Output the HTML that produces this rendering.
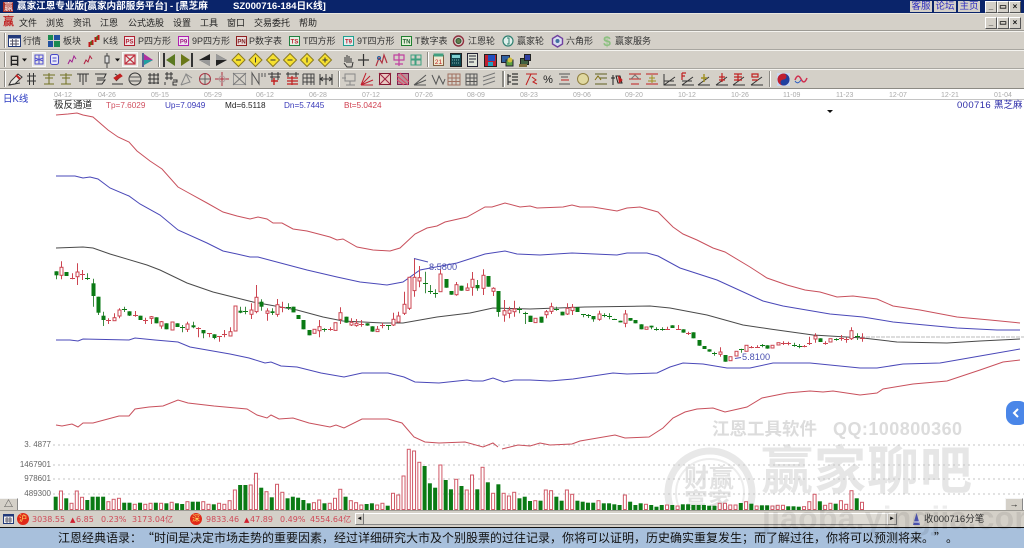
<!DOCTYPE html>
<html lang="zh-CN">
<head>
<meta charset="utf-8">
<title>赢家江恩专业版</title>
<style>
html,body{margin:0;padding:0;background:#fff}
body{width:1024px;height:548px;overflow:hidden;position:relative;font-family:"Liberation Sans","Noto Sans CJK SC",sans-serif;color:#222}
#w{position:absolute;left:0;top:0;width:1024px;height:548px;overflow:hidden;filter:blur(.3px)}
.t{position:absolute;white-space:nowrap;line-height:12px}
.b{position:absolute}
.m{font-size:9px;color:#222;top:17px}
.r2{font-size:9px;color:#333;top:35px}
.d{font-size:7px;color:#aaa;top:90px;letter-spacing:0}
.i{font-size:8.2px;top:100px}
.y{font-size:8px;color:#666;width:48px;text-align:right;left:3px}
.s{font-family:"DejaVu Sans","Noto Sans CJK SC",sans-serif;font-size:8px;color:#cf4a58;top:514px}
.tb{position:absolute;top:1px;height:11px;width:22px;background:#d4d0c8;color:#2a2ac0;font-size:9.5px;line-height:11px;text-align:center}
.wb{position:absolute;width:10px;height:10px;background:#d4d0c8;border-right:1px solid #555;border-bottom:1px solid #555;border-top:1px solid #fff;border-left:1px solid #fff;color:#111;font-size:8px;line-height:10px;text-align:center;font-weight:bold;box-sizing:content-box}
svg{position:absolute;left:0;top:0}
</style>
</head>
<body>
<div id="w">
<!-- chrome -->
<div class="b" style="left:0;top:0;width:1024px;height:13px;background:#0a246a"></div>
<div class="b" style="left:0;top:13px;width:1024px;height:76px;background:#d4d0c8"></div>
<div class="b" style="left:0;top:13px;width:1024px;height:1px;background:#e8e6e0"></div>
<div class="b" style="left:0;top:30px;width:1024px;height:1px;background:#9c9a94"></div>
<div class="b" style="left:0;top:31px;width:1024px;height:1px;background:#f4f3ef"></div>
<div class="b" style="left:0;top:49px;width:1024px;height:1px;background:#a8a6a0"></div>
<div class="b" style="left:0;top:50px;width:1024px;height:1px;background:#f4f3ef"></div>
<div class="b" style="left:0;top:68px;width:1024px;height:1px;background:#a8a6a0"></div>
<div class="b" style="left:0;top:69px;width:1024px;height:1px;background:#f4f3ef"></div>
<div class="b" style="left:0;top:88px;width:1024px;height:1px;background:#8c8a84"></div>
<div class="b" style="left:53px;top:99px;width:971px;height:1px;background:#c4c4c4"></div>

<!-- title -->
<div class="b" style="left:3px;top:2px;width:10px;height:10px;background:#a8342c"></div>
<span class="t" style="left:4px;top:1px;font-size:9px;color:#fff">赢</span>
<span class="t" style="left:17px;top:1px;font-size:9.6px;color:#fff;font-weight:bold;letter-spacing:0">赢家江恩专业版[赢家内部服务平台] - [黑芝麻</span>
<span class="t" style="left:233px;top:1px;font-size:9.6px;color:#fff;font-weight:bold">SZ000716-184日K线]</span>
<div class="tb" style="left:910px">客服</div>
<div class="tb" style="left:934px">论坛</div>
<div class="tb" style="left:958px">主页</div>
<div class="wb" style="left:985px;top:1px">_</div>
<div class="wb" style="left:997px;top:1px">&#9645;</div>
<div class="wb" style="left:1009px;top:1px">×</div>
<div class="wb" style="left:985px;top:17px">_</div>
<div class="wb" style="left:997px;top:17px">&#9645;</div>
<div class="wb" style="left:1009px;top:17px">×</div>

<!-- menu -->
<span class="t" style="left:3px;top:16px;font-size:11px;color:#c02020;font-weight:bold">赢</span>
<span class="t m" style="left:19px">文件</span>
<span class="t m" style="left:46px">浏览</span>
<span class="t m" style="left:73px">资讯</span>
<span class="t m" style="left:100px">江恩</span>
<span class="t m" style="left:128px">公式选股</span>
<span class="t m" style="left:173px">设置</span>
<span class="t m" style="left:200px">工具</span>
<span class="t m" style="left:227px">窗口</span>
<span class="t m" style="left:254px">交易委托</span>
<span class="t m" style="left:299px">帮助</span>

<!-- row 2 labels -->
<span class="t r2" style="left:23px">行情</span>
<span class="t r2" style="left:63px">板块</span>
<span class="t r2" style="left:103px">K线</span>
<span class="t r2" style="left:138px">P四方形</span>
<span class="t r2" style="left:192px">9P四方形</span>
<span class="t r2" style="left:249px">P数字表</span>
<span class="t r2" style="left:303px">T四方形</span>
<span class="t r2" style="left:357px">9T四方形</span>
<span class="t r2" style="left:415px">T数字表</span>
<span class="t r2" style="left:468px">江恩轮</span>
<span class="t r2" style="left:517px">赢家轮</span>
<span class="t r2" style="left:566px">六角形</span>
<span class="t r2" style="left:615px">赢家服务</span>

<!-- toolbar icons -->
<svg width="1024" height="89" viewBox="0 0 1024 89" fill="none">
<g stroke="#8c8a84"><path d="M4.500 33V48M4.500 52V67M4.500 71V87M158.500 52V67M427.500 52V67M338.500 71V87M502.500 71V87M769.500 71V87"/></g>
<g stroke="#fff"><path d="M5.500 33V48M5.500 52V67M5.500 71V87M159.500 52V67M428.500 52V67M339.500 71V87M504.500 71V87M770.500 71V87"/></g>
<path d="M503.500 71V87" stroke="#8c8a84"/>
<!-- row 2 -->
<rect x="8.500" y="35.500" width="12" height="11" fill="#fff" stroke="#223a7a"/><rect x="8.500" y="35.500" width="12" height="3" fill="#223a7a"/><path d="M10 41h9M10 44h9M12.500 39v7M16 39v7" stroke="#556"/>
<g><rect x="48" y="35" width="5" height="5" fill="#1a8a50"/><rect x="54" y="35" width="6" height="5" fill="#2050a0"/><rect x="48" y="41" width="5" height="6" fill="#2050a0"/><rect x="54" y="41" width="6" height="6" fill="#1a8a50"/></g>
<path d="M89.500 42v5M92.500 40v5M95.500 37v5M98.500 35v5" stroke="#c01818" stroke-width="2"/><path d="M91 41v4M97 36v4" stroke="#189018" stroke-width="1"/>
<g font-family="Liberation Sans" font-size="6" font-weight="bold" text-anchor="middle">
<rect x="124.500" y="36.500" width="10" height="9" fill="#efe4e8" stroke="#b02030"/><text x="129.500" y="43.500" fill="#b02030">PS</text>
<rect x="178.500" y="36.500" width="10" height="9" fill="#f0e4f0" stroke="#b020b0"/><text x="183.500" y="43.500" fill="#a01880">P9</text>
<rect x="236.500" y="36.500" width="10" height="9" fill="#e8dcdc" stroke="#902020"/><text x="241.500" y="43.500" fill="#802020">PN</text>
<rect x="289.500" y="36.500" width="10" height="9" fill="#e4f0e4" stroke="#208040"/><text x="294.500" y="43.500" fill="#c02030">TS</text>
<rect x="343.500" y="36.500" width="10" height="9" fill="#e4f0f0" stroke="#20a090"/><text x="348.500" y="43.500" fill="#c02030">T9</text>
<rect x="401.500" y="36.500" width="10" height="9" fill="#e4f0d8" stroke="#208030"/><text x="406.500" y="43.500" fill="#206030">TN</text>
</g>
<circle cx="458.500" cy="41" r="5" stroke="#903040" stroke-width="1.400"/><circle cx="458.500" cy="41" r="2.500" fill="#608050" stroke="#305030"/>
<circle cx="508" cy="41" r="5" stroke="#308070" stroke-width="1.200" fill="#dff0ec"/><path d="M507 38h2v6h-2" stroke="#308070"/>
<path d="M557.500 35.500l5 3v5.500l-5 3-5-3v-5.500z" stroke="#7040a0" stroke-width="1.400" fill="#d8dcf0"/><circle cx="557.500" cy="41" r="2" fill="#4070a0"/>
<text x="607" y="46" font-family="Liberation Sans" font-size="14" font-weight="bold" fill="#8cc080" text-anchor="middle">$</text>
<!-- row 3 -->
<path d="M22 58.500h5l-2.500 3zM115 58.500h5l-2.500 3z" fill="#111"/>
<text x="9" y="64.500" font-family="Noto Sans CJK SC" font-size="11" font-weight="bold" fill="#222">日</text>
<rect x="32.500" y="52.500" width="13" height="14" fill="#e8e6e2" stroke="#f8f8f8"/>
<path d="M35 55h8v9h-8zM35 58l8 3M43 58l-8 3M39 55v9" stroke="#5050d0"/>
<rect x="50.500" y="54.500" width="8" height="10" rx="2" stroke="#4848c8" fill="#e8e8f8"/><path d="M52.500 58h4M52.500 61h4" stroke="#4848c8"/>
<path d="M68 64l2-4 2 2 2-6 2 3" stroke="#a02090"/><path d="M84 64l2-4 2 2 2-6 2 3" stroke="#b02040"/>
<path d="M107 53v15" stroke="#444"/><rect x="105" y="56" width="4" height="7" fill="#ddd" stroke="#444"/>
<rect x="122.500" y="52.500" width="15" height="14" fill="#e8e6e2" stroke="#f8f8f8"/>
<path d="M125 55l10 9M135 55l-10 9M125 55h10v9h-10z" stroke="#c03040" stroke-width="1.200"/>
<path d="M143 53v14" stroke="#304080" stroke-width="1.500"/><path d="M144 54l9 6-9 5z" fill="#b030a0"/><path d="M144 60h9l-9 5z" fill="#20a0a0"/>
<path d="M164 53v14" stroke="#333" stroke-width="2"/><path d="M175 54v12l-9-6z" fill="#5a7820"/>
<path d="M192 53v14" stroke="#333" stroke-width="2"/><path d="M181 54v12l9-6z" fill="#6a7818"/>
<path d="M210 54v12l-11-6z" fill="#222"/><path d="M210 60v6l-11-6z" fill="#999"/>
<path d="M216 54v12l11-6z" fill="#222"/><path d="M216 54v6l11 0z" fill="#999"/>
<g fill="#f6e030" stroke="#8a7a20">
<path d="M238.500 53.500l6.500 6.500-6.500 6.500-6.500-6.500z"/><path d="M255.500 53.500l6.500 6.500-6.500 6.500-6.500-6.500z"/><path d="M273 53.500l6.500 6.500-6.500 6.500-6.500-6.500z"/><path d="M290 53.500l6.500 6.500-6.500 6.500-6.500-6.500z"/><path d="M307 53.500l6.500 6.500-6.500 6.500-6.500-6.500z"/><path d="M325 53.500l6.500 6.500-6.500 6.500-6.500-6.500z"/></g>
<g stroke="#333" fill="none"><path d="M236 60h5M255.500 57.500v5M270.500 60h5M287.500 60h5M307 57.500v5M322.500 60h5M325 57.500v5"/></g>
<path d="M345 62v-5m2 6v-8m2 8v-7m2 7v-5m-7 5l3 4h5l1-5" stroke="#333"/>
<path d="M363.500 54v12M358 60h11" stroke="#333" stroke-width="1.200"/>
<path d="M376 66l3-8 3 5 2-8 3 8" stroke="#b03040" stroke-width="1.200"/><circle cx="379" cy="58" r="1.500" stroke="#2060a0"/>
<path d="M394 55h10v5h-10zM399 53v13M395 64h8" stroke="#c040a0" stroke-width="1.200"/>
<path d="M411 55h4v4h-4zM416 55h5v4h-5zM411 60h4v5h-4zM416 60h5v5h-5z" stroke="#40a080"/>
<rect x="433.500" y="55.500" width="10" height="10" fill="#f0e8d0" stroke="#806040"/><rect x="433.500" y="53.500" width="10" height="3" fill="#40a080"/><text x="438.500" y="64" font-size="6.500" font-family="Liberation Sans" fill="#c02020" text-anchor="middle">21</text>
<rect x="450.500" y="53.500" width="11" height="13" fill="#104850" stroke="#222"/><rect x="452" y="55" width="8" height="3" fill="#80d0d0"/><path d="M452 60h8M452 63h8" stroke="#80b0b0" stroke-dasharray="1 1"/>
<rect x="467.500" y="53.500" width="10" height="13" fill="#dfe4d8" stroke="#223"/><path d="M469 56h7M469 59h7M469 62h5" stroke="#223"/>
<rect x="484.500" y="54.500" width="12" height="12" fill="#c02030" stroke="#222"/><rect x="488" y="55" width="7" height="6" fill="#2050c0"/><rect x="488" y="62" width="5" height="4" fill="#20a0c0"/>
<rect x="501.500" y="55.500" width="8" height="7" fill="#3060a0" stroke="#223"/><rect x="506" y="60" width="7" height="6" fill="#60a040" stroke="#223"/><circle cx="510" cy="60" r="2.500" fill="#d0c040"/>
<rect x="520.500" y="58.500" width="8" height="6" fill="#406040" stroke="#222"/><rect x="524.500" y="54.500" width="6" height="6" fill="#3040a0" stroke="#222"/><rect x="519" y="64" width="8" height="3" fill="#807040"/>
<!-- row 4 -->
<g stroke="#333" fill="none">
<path d="M9 85l2-4 7-7 4 3-7 7z" fill="#e8e6e0"/><path d="M9 85l11-2" stroke="#333"/><path d="M16 75l4 4" stroke="#c02020" stroke-width="2"/>
<path d="M27 76h9M27 81h9M29.500 73v12M33.500 73v12"/>
<path d="M43 75h12M45 78h8M49 73v11M44 84h10" stroke="#707020"/><path d="M60 75h12M62 78h8M66 73v11M61 84h10" stroke="#707020"/>
<path d="M77 74h12M80 74v8M86 74v8M83 74v11"/>
<path d="M95 74h11l-2 4h-7M97 80h8l-3 4h-6"/>
<path d="M112 84h11M115 74l5 3-4 4" /><path d="M114 78l6-4 2 2-6 4z" fill="#c02020" stroke="#c02020"/>
<circle cx="135" cy="79" r="6"/><path d="M129 77h12M129 81h12" stroke="#555"/>
<path d="M148 75h11M148 79h11M148 83h11M150 73v11M154 73v11M158 73v11"/>
<path d="M165 74h8M165 78h8M167 72v8M171 72v8M173 80h4v2h-4v3h4"/><path d="M165 82v3" />
<path d="M181 85l5-11 4 8-9 3M186 74l6 4" stroke="#888"/>
<circle cx="205" cy="79" r="5.500" stroke="#b03040"/><path d="M199 79h12M205 73v12" stroke="#606060"/>
<path d="M215 79h14M222 72v14" stroke="#b03040"/><circle cx="222" cy="79" r="3" stroke="#b0a0a0"/>
<rect x="233.500" y="73.500" width="12" height="11" stroke="#999"/><path d="M233 73l13 12M246 73l-13 12" stroke="#777"/>
<path d="M252 85v-12l7 11v-11M262 73v4M265 73v4" stroke="#555"/>
<path d="M268 74h13M270 77h10M272 72v8M278 72v8" stroke="#333"/><path d="M274 78v7M271 81h7" stroke="#c02020" stroke-width="1.400"/>
<path d="M286 74h13M288 72v5M296 72v5" stroke="#333"/><path d="M287 78h11M287 84h11M292 76v9M287 81h11" stroke="#c02020" stroke-width="1.200"/>
<path d="M303 74h11v11M303 74v11M303 78h11M303 82h11M307 74v11M311 74v11" stroke="#444"/>
<path d="M320 74v11M332 74v11M320 79h12M323 77l-3 2 3 2M329 77l3 2-3 2M326 74v11" stroke="#333"/>
<path d="M345 74h10v7h-10zM350 81v4M346 85h9M342 78h4" stroke="#888"/>
<path d="M361 85l5-12M361 85l9-9M361 85l12-5M361 85h12" stroke="#c02030"/>
<rect x="379.500" y="73.500" width="11" height="11" fill="#e8c8c0" stroke="#801830"/><path d="M379 85l12-12M379 73l12 12" stroke="#a02040"/>
<rect x="397.500" y="73.500" width="11" height="11" fill="#b89098" stroke="#802050"/><path d="M397 76l11 9M400 73l9 9M397 80l7 5" stroke="#e04060"/>
<path d="M414 85l12-10M414 85l12-5M414 85h12" stroke="#555"/>
<path d="M432 75l4 9 3-8 4 8 2-5" stroke="#555"/>
<path d="M448 74h12v11h-12zM448 78h12M448 81.500h12M452 74v11M456 74v11" stroke="#a07060"/>
<path d="M466 74h11v11h-11zM466 78h11M466 81.500h11M470 74v11M474 74v11" stroke="#555"/>
<path d="M483 77l12-4M483 81l12-4M483 85l12-4" stroke="#777"/>
<path d="M508 74v11M512 74h6M512 77h6M512 80h6M512 84h6M508 76h3M508 82h3" stroke="#333" stroke-width="1.200"/>
<path d="M526 74h11M531 74l-5 11" stroke="#c02020"/><path d="M532 77l4 3-3 2 4 2" stroke="#c02020"/>
<text x="548" y="83" font-family="Liberation Sans" font-size="11" fill="#222" stroke="none" text-anchor="middle">%</text>
<path d="M559 74h11M561 77h7M559 84h11" stroke="#555"/><path d="M561 80h8" stroke="#c02020"/>
<circle cx="583" cy="79" r="5.500" fill="#e0d8a0" stroke="#908040"/>
<path d="M595 74h12M600 78h7M595 84h12" stroke="#606020"/><path d="M595 80l3-4 3 4" stroke="#807010"/>
<path d="M613 75v10M611 78h4M616 76h4l2 7h-4z" stroke="#222"/><path d="M618 76l4 4-3 3" fill="#c02020" stroke="#c02020"/>
<path d="M629 74h12M631 84h8M629 79h12" stroke="#c02020"/><path d="M631 79l4-4 4 4" stroke="#777"/>
<path d="M646 74h12M646 84h12" stroke="#c02020"/><path d="M652 75v8M649 78h6M648 81h8" stroke="#a09020"/>
<path d="M664 74v11h12M664 85l11-8M664 81h10" stroke="#333"/>
<path d="M682 85h12M682 85l11-8M682 81h10" stroke="#333"/><path d="M682 73h4M682 73v7M682 76h3" stroke="#c02020" stroke-width="1.200"/>
<path d="M698 85h12M698 85l11-8" stroke="#333"/><path d="M704 74v8M701 78h6" stroke="#a09020" stroke-width="1.400"/>
<path d="M716 85h12M716 85l11-8" stroke="#333"/><path d="M722 73v9M719 77h6M719 80h6" stroke="#c02020" stroke-width="1.200"/>
<path d="M733 85h12M733 85l11-8" stroke="#333"/><path d="M734 74h8M734 77h8M734 80h8M738 74v7" stroke="#c02020" stroke-width="1.200"/>
<path d="M751 85h12M751 85l11-8" stroke="#333"/><path d="M752 74h6v3h-6zM752 80h6" stroke="#c02020" stroke-width="1.200"/>
</g>
<rect x="777" y="73" width="13" height="13" fill="#c8d8f0"/><circle cx="783.500" cy="79.500" r="6" fill="#c02030"/><path d="M783.500 73.500a3 3 0 0 1 0 6a3 3 0 0 0 0 6a6 6 0 0 0 0-12" fill="#2040a0"/>
<path d="M795 80c2-5 4-5 6-1s4 4 6-1" stroke="#d03050" stroke-width="1.500"/><path d="M795 81c2 3 4 2 6-1" stroke="#3060c0"/>
</svg>

<!-- axis + info -->
<span class="t" style="left:3px;top:94px;font-size:9.5px;color:#2838c0">日K线</span>
<span class="t d" style="left:54px">04-12</span><span class="t d" style="left:98px">04-26</span><span class="t d" style="left:151px">05-15</span><span class="t d" style="left:204px">05-29</span><span class="t d" style="left:256px">06-12</span><span class="t d" style="left:309px">06-28</span><span class="t d" style="left:362px">07-12</span><span class="t d" style="left:415px">07-26</span><span class="t d" style="left:467px">08-09</span><span class="t d" style="left:520px">08-23</span><span class="t d" style="left:573px">09-06</span><span class="t d" style="left:625px">09-20</span><span class="t d" style="left:678px">10-12</span><span class="t d" style="left:731px">10-26</span><span class="t d" style="left:783px">11-09</span><span class="t d" style="left:836px">11-23</span><span class="t d" style="left:889px">12-07</span><span class="t d" style="left:941px">12-21</span><span class="t d" style="left:994px">01-04</span>
<span class="t i" style="left:54px;color:#222;font-size:9.5px">极反通道</span>
<span class="t i" style="left:106px;color:#d05060">Tp=7.6029</span>
<span class="t i" style="left:165px;color:#3838b8">Up=7.0949</span>
<span class="t i" style="left:225px;color:#222">Md=6.5118</span>
<span class="t i" style="left:284px;color:#3838b8">Dn=5.7445</span>
<span class="t i" style="left:344px;color:#d04050">Bt=5.0424</span>
<span class="t i" style="left:957px;color:#2c2ca8;font-size:9.5px;letter-spacing:.4px">000716</span>
<span class="t i" style="left:994px;color:#2c2ca8;font-size:9.500px">黑芝麻</span>
<span class="t y" style="top:439px">3. 4877</span>
<span class="t y" style="top:459px">1467901</span>
<span class="t y" style="top:473px">978601</span>
<span class="t y" style="top:488px">489300</span>

<!-- watermark -->
<span class="t" style="left:712px;top:419px;line-height:20px;font-size:17.500px;font-weight:bold;color:#dcdcdc">江恩工具软件</span>
<span class="t" style="left:833px;top:419px;line-height:20px;font-size:18px;font-weight:bold;color:#dcdcdc;letter-spacing:.45px">QQ:100800360</span>
<svg width="1024" height="548" viewBox="0 0 1024 548" fill="none">
<circle cx="710" cy="493" r="42" stroke="#e8e8e8" stroke-width="7"/>
<circle cx="710" cy="493" r="34" stroke="#ececec" stroke-width="2"/>
</svg>
<span class="t" style="left:684px;top:466px;line-height:26px;font-size:25px;font-weight:bold;color:#e2e2e2">财赢</span>
<span class="t" style="left:684px;top:491px;line-height:24px;font-size:24px;font-weight:bold;color:#e2e2e2">富家</span>
<span class="t" style="left:761px;top:442px;line-height:60px;font-size:52px;font-weight:bold;color:#e6e6e6;letter-spacing:1px">赢家聊吧</span>

<!-- chart -->
<svg id="c" width="1024" height="548" viewBox="0 0 1024 548" fill="none">
<path d="M53 445H1024M53 465H1024M53 479H1024M53 494H1024" stroke="#c4c4c4" stroke-dasharray="2 3"/>
<path d="M856 337H1024" stroke="#bbb" stroke-dasharray="4 1"/>
<polyline stroke="#c8505c" points="56,115 68,114 77,113 83,115 93,117 108,130 118,137 129,142 137,151 150,161 162,169 178,187 187,192 207,203 223,212 237,216 250,219 258,217 267,219 273,223 282,223 293,229 307,231 330,237 337,240 343,239 357,247 373,250 390,251 400,248 415,234 427,228 437,226 445,222 467,217 485,207 492,207 505,203 520,207 530,206 537,208 563,207 572,205 580,207 593,207 617,211 627,208 640,207 658,212 673,227 683,234 697,240 713,248 725,252 750,267 767,278 787,285 805,290 820,292 837,297 853,296 877,299 893,306 920,310 957,317 990,320 1020,323"/>
<polyline stroke="#4a48b8" points="56,176 75,176 83,178 90,177 98,179 110,188 129,196 140,204 160,215 178,230 207,243 223,251 237,254 250,257 258,257 273,261 307,270 337,277 360,282 387,285 403,282 420,270 457,263 485,254 505,251 517,254 540,255 572,253 617,255 627,253 647,253 658,256 680,268 717,280 763,301 783,306 830,314 863,317 893,322 957,328 997,330 1020,330"/>
<polyline stroke="#4a4a4a" points="56,248 83,247 93,248 110,254 147,265 160,270 187,283 213,292 253,302 297,310 323,317 343,321 383,323 403,323 437,317 470,313 493,308 530,309 585,307 650,306 670,308 707,315 743,325 770,329 813,335 863,338 897,342 947,343 980,341 1020,339"/>
<polyline stroke="#4a48b8" points="56,340 70,340 78,341 83,339 129,340 135,338 155,340 178,342 190,347 230,354 249,358 265,363 271,362 281,366 297,367 321,373 344,377 362,373 388,373 404,377 415,382 439,383 467,380 473,381 483,381 493,378 504,382 514,380 530,380 550,381 573,379 613,373 627,374 657,373 670,367 683,363 703,364 727,368 750,368 773,363 810,363 860,368 877,368 903,364 940,363 980,356 1020,349"/>
<polyline stroke="#c8505c" points="56,425 62,426 72,424 78,427 83,423 93,423 119,416 129,416 135,409 149,407 163,406 178,400 188,403 214,406 247,409 257,415 267,418 271,415 279,419 293,418 309,423 330,427 336,425 344,428 362,419 388,419 402,423 414,437 425,442 439,443 465,442 483,447 493,443 498,447"/>
<polyline stroke="#c8505c" points="502,449 518,445 530,446 540,443 550,445 572,444 580,441 615,435 625,438 649,437 663,428 673,418 685,412 697,409 713,408 725,412 747,407 762,398 787,393 810,391 823,392 833,391 860,395 877,393 883,389 913,384 947,381 980,370 1003,362 1020,360"/>
<g id="cg"></g>
<path d="M414 258.500L428 262" stroke="#5050b8"/>
<path d="M735 358.500L741 357.500" stroke="#5050b8"/>
<path d="M827 110h6l-3 3z" fill="#111"/>
</svg>
<span class="t" style="left:429px;top:261px;font-size:9.200px;color:#4a50b0">8.5800</span>
<span class="t" style="left:742px;top:351px;font-size:9.200px;color:#4a50b0">5.8100</span>

<!-- right tab -->
<div class="b" style="left:1006px;top:401px;width:22px;height:24px;border-radius:9px;background:#4a86e8"></div>
<svg width="1024" height="548" viewBox="0 0 1024 548" fill="none"><path d="M1018 409l-4 4 4 4" stroke="#fff" stroke-width="2"/></svg>

<!-- bottom -->
<div class="b" style="left:0;top:510px;width:1024px;height:1px;background:#9c9a94"></div>
<div class="b" style="left:0;top:511px;width:1024px;height:16px;background:#d4d0c8"></div>
<div class="b" style="left:0;top:527px;width:1024px;height:1px;background:#111"></div>
<div class="b" style="left:0;top:528px;width:1024px;height:20px;background:#a8c0dc"></div>
<div class="b" style="left:0;top:498px;width:18px;height:12px;background:#d4d0c8;border-top:1px solid #f4f4f4;box-sizing:border-box;border-right:1px solid #888;color:#333;font-size:9px;line-height:11px;text-align:center">△</div>
<div class="b" style="left:1005px;top:498px;width:18px;height:12px;background:#d4d0c8;border-top:1px solid #f4f4f4;border-left:1px solid #f4f4f4;box-sizing:border-box;border-right:1px solid #888;color:#111;font-size:9px;line-height:10px;text-align:center">→</div>
<div class="b" style="left:355px;top:513px;width:9px;height:12px;background:#d4d0c8;border:1px solid #fff;border-right-color:#777;border-bottom-color:#777;box-sizing:border-box;color:#111;font-size:6px;line-height:10px;text-align:center">◄</div>
<div class="b" style="left:364px;top:513px;width:523px;height:12px;background:#dedbd4;border-top:1px solid #fff;border-bottom:1px solid #888;box-sizing:border-box"></div>
<div class="b" style="left:887px;top:513px;width:10px;height:12px;background:#d4d0c8;border:1px solid #fff;border-right-color:#777;border-bottom-color:#777;box-sizing:border-box;color:#111;font-size:6px;line-height:10px;text-align:center">►</div>
<svg width="1024" height="548" viewBox="0 0 1024 548" fill="none">
<rect x="3.500" y="514.500" width="10" height="9" fill="#eee" stroke="#223a7a"/><rect x="3.500" y="514.500" width="10" height="2" fill="#223a7a"/><path d="M5 519h7M5 521h7M7 517v6M10 517v6" stroke="#667"/>
<circle cx="23" cy="519" r="6" fill="#e02818"/><circle cx="196" cy="519" r="6" fill="#e02818"/>
<path d="M916.500 513l3.500 12h-7z" fill="#5058b8"/><path d="M914 522h5" stroke="#fff"/>
</svg>
<span class="t" style="left:19px;top:513px;font-size:8px;color:#fde060">沪</span>
<span class="t" style="left:192px;top:513px;font-size:8px;color:#fde060">深</span>
<span class="t s" style="left:32px">3038.55</span><span class="t s" style="left:70px;font-size:7px;color:#d02030">▲</span><span class="t s" style="left:76px">6.85</span><span class="t s" style="left:101px">0.23%</span><span class="t s" style="left:132px">3173.04亿</span>
<span class="t s" style="left:206px">9833.46</span><span class="t s" style="left:244px;font-size:7px;color:#d02030">▲</span><span class="t s" style="left:250px">47.89</span><span class="t s" style="left:280px">0.49%</span><span class="t s" style="left:310px">4554.64亿</span>
<span class="t" style="left:924px;top:514px;font-size:9.500px;color:#333">收000716分笔</span>
<span class="t" style="left:762px;top:501px;line-height:34px;font-size:32px;font-weight:bold;color:#000;opacity:.07;letter-spacing:.2px">jiaoba.yingjia.com</span>
<span class="t" style="left:58px;top:531px;line-height:14px;font-size:12px;color:#111;font-family:'Noto Sans CJK SC','Liberation Sans',sans-serif;text-spacing-trim:space-all;font-kerning:none;font-feature-settings:'palt' 0">江恩经典语录：“时间是决定市场走势的重要因素，经过详细研究大市及个别股票的过往记录，你将可以证明，历史确实重复发生；而了解过往，你将可以预测将来。”。</span>
</div>
<script>
var G='g',R='r';
var A=[[G,64,64,76,88],[R,34,52,76,88],[G,66,66,78,78],[R,70,85,88,88],[R,40,66,80,105],[R,60,71,73,90],[G,70,84,87,90],[G,86,100,138,170],[G,140,140,188,195],[G,185,197,210,228],[R,205,209,213,222],[R,190,203,212,213],[R,175,180,198,205],[G,170,178,181,186],[G,184,184,197,198],[R,183,195,198,200],[G,197,197,210,210],[R,203,209,212,222],[R,198,200,205,222],[G,202,202,220,220],[R,213,215,228,236],[G,220,220,238,238],[R,216,216,240,240],[G,220,220,231,231],[G,225,232,235,247],[R,215,222,238,246],[G,215,226,232,235],[R,232,235,238,262],[G,240,240,250,265],[R,250,250,254,262],[G,253,253,264,268],[R,258,258,262,275],[R,240,252,255,262],[R,232,245,258,258],[R,168,168,243,243],[G,170,182,188,190],[G,170,184,188,193],[R,160,180,193,207],[R,105,142,185,190],[G,148,155,170,182],[R,175,183,190,212],[G,175,184,189,195],[R,147,164,193,200],[R,155,170,173,187],[G,160,172,175,180],[G,170,170,187,187],[G,195,195,207,207],
[G,210,210,238,238],[G,240,240,256,256],[R,238,238,250,250],[R,210,230,242,262],[G,235,238,240,245],[R,232,236,240,242],[R,218,218,241,241],[R,172,188,208,222],[G,200,200,218,218],[R,205,217,225,228],[R,207,220,227,230],[R,210,222,226,230],[G,220,220,227,227],[G,229,229,245,245],[R,228,238,245,245],[R,218,225,228,235],[G,225,225,229,240],[R,188,208,225,228],[R,185,198,216,218],[R,125,163,190,195],[R,82,82,175,180],[R,25,82,122,140],[R,48,83,93,112],[G,65,100,103,130],[G,105,124,128,132],[G,118,128,131,143],[R,58,72,125,125],[G,87,87,113,113],[G,123,123,134,134],[R,96,104,134,137],[G,107,107,122,122],[R,100,114,121,122],[R,66,88,112,137],[G,90,105,115,122],[R,58,76,115,135],[G,78,78,110,110],[R,112,115,124,138],[G,123,123,186,200],[R,150,182,195,215],[R,170,180,190,205],[R,152,177,185,200],[G,170,178,180,190],[G,185,188,192,222],[G,197,197,216,216],[R,205,205,218,218],[G,200,200,218,218]];
var B=[[R,60,65,74,85],[R,38,50,64,72],[G,50,58,60,62],[G,65,65,76,76],[R,40,55,72,75],[R,42,52,62,75],[G,52,52,66,66],[G,72,72,74,82],[G,72,76,78,84],[G,78,78,88,95],[R,62,72,88,92],[G,70,75,76,82],[G,70,77,78,88],[G,86,86,90,90],[G,92,92,97,97],[R,60,72,100,112],[G,84,84,92,92],[G,90,90,100,100],[G,103,103,118,118],[R,111,111,118,118],[G,107,107,112,118],[G,112,118,119,122],[G,112,118,119,122],[R,110,116,117,120],[G,106,106,114,114],[R,105,117,118,120],[G,118,118,128,128],[R,125,128,129,135],[G,127,127,145,145],[G,150,150,167,167],[G,168,168,177,177],[G,178,178,185,185],[G,185,190,191,197],[R,172,186,193,200],[G,195,195,215,215],[R,200,200,212,212],[R,184,184,198,198],[G,176,176,180,188],[R,166,166,184,184],[R,168,171,172,175],[R,166,170,171,174],[G,162,166,167,172],[G,166,166,176,176],[R,166,166,174,174],[R,158,158,165,165],[R,154,158,159,165],[R,155,160,161,166],[G,158,164,165,170],[G,162,168,169,175],[R,165,168,169,172],[R,140,158,159,165],[R,130,138,147,158],[G,145,145,156,156],[R,154,158,159,164],[R,146,146,156,156],[G,145,148,149,152],[R,135,145,146,152],[R,142,148,149,158],[R,112,122,146,150],[G,130,137,138,150],[R,130,144,145,155]];
var V1=[170,-153,175,-190,-153,-172,180,170,170,170,-185,-178,-175,188,188,-193,188,-193,-190,188,-190,190,-187,190,192,-185,185,185,-185,-193,193,-190,-193,-182,-150,135,135,-135,-100,143,-155,172,-133,-157,175,170,173,180,190,-188,-180,190,-190,-175,-148,170,
-182,-188,-195,192,190,-195,-190,197,-160,-165,-108,-28,-33,-67,78,130,143,-75,120,148,-118,138,-150,-105,148,-82,127,-160,133,-160,-168,-157,175,170,183,-182,182,-150,-152,170,182,-150,-163,182,185,188,188,-182,190,190,193,195,-165,185,195,190,-193,195,200,195,-195,195,-198,193,193];
var V2=[315,315,315,317,317,-310,-310,-315,-315,309,-305,311,-318,316,316,-318,-316,-316,319,319,320,-320,-305,-283,304,-316,-310,311,-302,-313,-272,295,-307];
var GC='#0a7a14',RC='#cc4450',s='';
function X(n){return 55.7+5.27*n}
function C(n,c,off){var x=Math.round(X(n)),col=c[0]==G?GC:RC,w=+c[1]/3+off,t=+c[2]/3+off,b=+c[3]/3+off,e=+c[4]/3+off;
 s+='<path d="M'+(x+.5)+' '+w.toFixed(1)+'V'+e.toFixed(1)+'" stroke="'+(c[0]==G?'#3a8a40':RC)+'"/>';
 if(b-t<1.4){s+='<path d="M'+(x-2)+' '+(t.toFixed(0)-(-.5))+'h5" stroke="'+col+'"/>';}
 else if(c[0]==G){s+='<rect x="'+(x-1.5)+'" y="'+t.toFixed(1)+'" width="4" height="'+(b-t).toFixed(1)+'" fill="'+GC+'"/>';}
 else{s+='<rect x="'+(x-1)+'" y="'+t.toFixed(1)+'" width="3" height="'+(b-t).toFixed(1)+'" fill="#fff" stroke="'+RC+'"/>';}
}
A.forEach(function(c,i){C(i,c,250)});
B.forEach(function(c,i){C(93+i,c,290)});
function Vb(n,v,off){var x=X(n),y=Math.abs(v)/3+off;
 if(v>0)s+='<rect x="'+(x-2).toFixed(2)+'" y="'+y.toFixed(1)+'" width="4" height="'+(510-y).toFixed(1)+'" fill="'+GC+'"/>';
 else s+='<rect x="'+(x-1.5).toFixed(2)+'" y="'+y.toFixed(1)+'" width="3" height="'+(509.5-y).toFixed(1)+'" fill="#fff" stroke="#d05a68"/>';
}
V1.forEach(function(v,i){Vb(i,v,440)});
V2.forEach(function(v,i){Vb(121+i,v,400)});
document.getElementById('cg').innerHTML=s;
</script>
</body>
</html>
